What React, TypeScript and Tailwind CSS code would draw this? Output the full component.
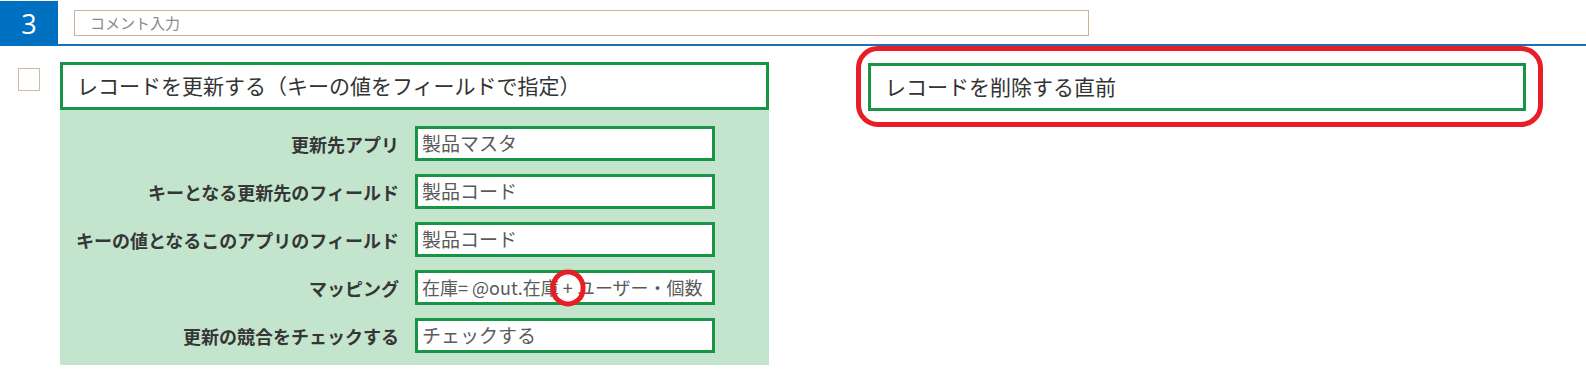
import React from "react";

const FONT = { fontFamily: '"Noto Sans CJK JP", "Noto Sans", sans-serif' };

function Row({ label, children, small }: { label: string; children: React.ReactNode; small?: boolean }) {
  return (
    <div className="flex items-center justify-end gap-[16px] h-[35px]">
      <div className="text-[18px] font-bold text-[#363636] leading-none whitespace-nowrap">{label}</div>
      <div
        className={
          "relative w-[300px] h-[35px] border-[3px] border-[#1a9347] bg-white flex items-center pl-[4px] text-[#5a5a5a] whitespace-nowrap " +
          (small ? "text-[18px]" : "text-[19px]")
        }
      >
        {children}
      </div>
    </div>
  );
}

export default function App() {
  return (
    <div className="w-[1586px] h-[371px] bg-white overflow-hidden" style={FONT}>
      {/* top bar */}
      <div className="flex h-[46px]">
        <div className="w-[58px] h-[45px] mt-[1px] bg-[#0071c1] flex items-center justify-center text-white text-[27px] leading-none" style={{ fontFamily: '"Open Sans", "Noto Sans", sans-serif' }}>
          3
        </div>
        <div className="flex-1 border-b-2 border-[#1f6fb3]">
          <div className="ml-[16px] mt-[10px] w-[1015px] h-[26px] border-[1.5px] border-[#cdb396] flex items-center pl-[15px] text-[15px] text-[#8a8a8a]">
            コメント入力
          </div>
        </div>
      </div>

      {/* main */}
      <div className="flex items-start">
        <div className="ml-[18px] mt-[22px] w-[22px] h-[23px] border-[1.5px] border-[#cdbba5] bg-white" />

        <div className="ml-[20px] mt-[16px] w-[709px]">
          <div className="h-[48px] border-[3px] border-[#1a9347] flex items-center pl-[14px] text-[21px] text-[#333]">
            レコードを更新する（キーの値をフィールドで指定）
          </div>
          <div className="bg-[#c4e5cd] pt-[16px] pb-[12px] pr-[54px] flex flex-col gap-[13px]">
            <Row label="更新先アプリ">製品マスタ</Row>
            <Row label="キーとなる更新先のフィールド">製品コード</Row>
            <Row label="キーの値となるこのアプリのフィールド">製品コード</Row>
            <Row label="マッピング" small>
              <span>在庫= @out.在庫&nbsp;</span>
              <span className="relative">
                +
                <span className="absolute left-1/2 top-1/2 -translate-x-1/2 -translate-y-1/2 w-[35px] h-[37px] rounded-full border-[5px] border-[#e81e26]" />
              </span>
              <span>&nbsp;ユーザー・個数</span>
            </Row>
            <Row label="更新の競合をチェックする">チェックする</Row>
          </div>
        </div>

        <div className="ml-[87px] w-[687px] h-[81px] border-[5px] border-[#e81e26] rounded-[22px] pl-[7px] pt-[12px]">
          <div className="w-[658px] h-[48px] border-[3px] border-[#1a9347] flex items-center pl-[14px] text-[21px] text-[#333]">
            レコードを削除する直前
          </div>
        </div>
      </div>
    </div>
  );
}
